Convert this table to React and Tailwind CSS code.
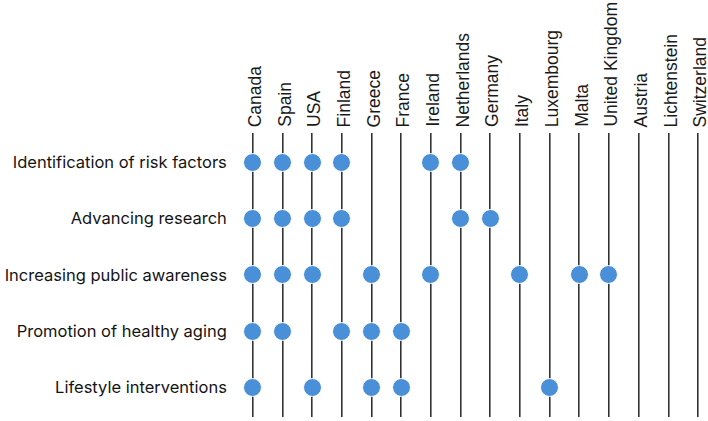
import React from "react";

const countries = [
  "Canada",
  "Spain",
  "USA",
  "Finland",
  "Greece",
  "France",
  "Ireland",
  "Netherlands",
  "Germany",
  "Italy",
  "Luxembourg",
  "Malta",
  "United Kingdom",
  "Austria",
  "Lichtenstein",
  "Switzerland",
];

// which countries have a dot in each row
const rows = [
  { label: "Identification of risk factors", on: ["Canada", "Spain", "USA", "Finland", "Ireland", "Netherlands"] },
  { label: "Advancing research", on: ["Canada", "Spain", "USA", "Finland", "Netherlands", "Germany"] },
  { label: "Increasing public awareness", on: ["Canada", "Spain", "USA", "Greece", "Ireland", "Italy", "Malta", "United Kingdom"] },
  { label: "Promotion of healthy aging", on: ["Canada", "Spain", "Finland", "Greece", "France"] },
  { label: "Lifestyle interventions", on: ["Canada", "USA", "Greece", "France", "Luxembourg"] },
];

function Column({ name }) {
  return (
    <div className="flex flex-col items-center">
      {/* Country label, rotated */}
      <div className="h-[127px] w-full flex items-end justify-center">
        <span
          className="[writing-mode:vertical-rl] rotate-180 translate-x-[3px] whitespace-nowrap leading-none text-[17.5px] text-[#1a1a1a]"
          style={{ fontFamily: '"Liberation Sans", Arial, sans-serif' }}
        >
          {name}
        </span>
      </div>

      {/* Line with dots */}
      <div className="mt-[6px] h-[284px] w-full py-[1px] bg-[linear-gradient(#333333,#333333)] bg-no-repeat bg-center bg-[length:1.6px_100%]">
        {rows.map((r) => (
          <div key={r.label} className="h-[56.4px] flex items-center justify-center">
            {r.on.includes(name) && (
              <div className="w-[19px] h-[19px] rounded-full bg-[#4a90d9] border-[1.5px] border-white" />
            )}
          </div>
        ))}
      </div>
    </div>
  );
}

export default function App() {
  return (
    <div className="w-[708px] h-[421px] bg-white overflow-hidden flex">
      {/* Row labels */}
      <div
        className="w-[237.85px] shrink-0 pt-[134px] pr-[11px] text-[16.5px] text-[#141414]"
        style={{ fontFamily: "Inter, sans-serif" }}
      >
        {rows.map((r) => (
          <div key={r.label} className="h-[56.4px] flex items-center justify-end whitespace-nowrap">
            {r.label}
          </div>
        ))}
      </div>

      {/* Country columns */}
      <div className="grid grid-cols-[repeat(16,29.7px)] shrink-0">
        {countries.map((c) => (
          <Column key={c} name={c} />
        ))}
      </div>
    </div>
  );
}
